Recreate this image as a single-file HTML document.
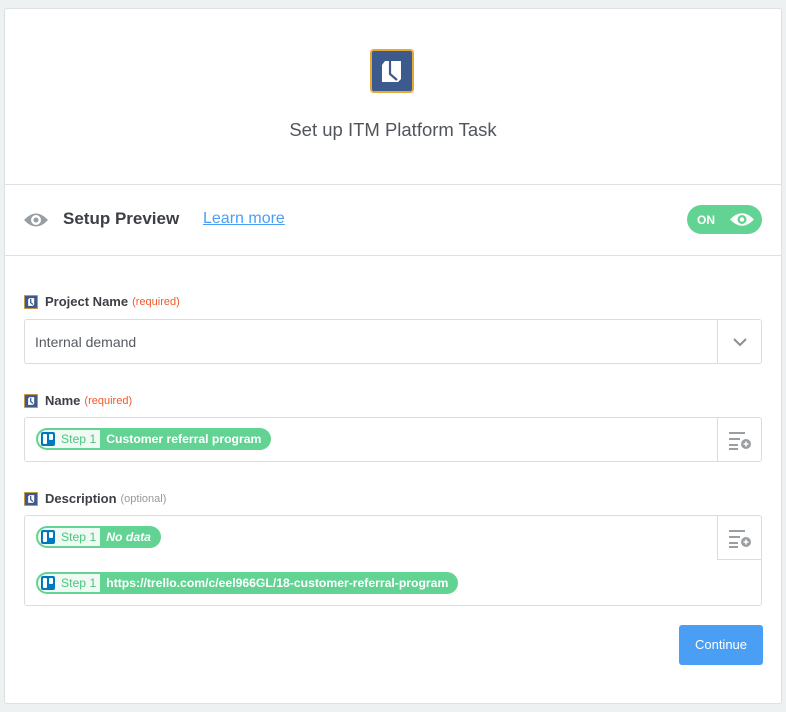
<!DOCTYPE html>
<html><head><meta charset="utf-8"><style>
*{box-sizing:border-box;margin:0;padding:0}
body{width:786px;height:712px;background:#eef1f2;font-family:"Liberation Sans",sans-serif;position:relative;overflow:hidden}
.card{position:absolute;left:4px;top:8px;width:778px;height:696px;background:#fff;border:1px solid #dde1e3;border-radius:3px}
.in{position:absolute;left:-1px;top:0;width:778px;height:696px}
.abs{position:absolute}
.hr{position:absolute;left:0;right:0;height:1px;background:#dde1e3}
.label{position:absolute;left:20px;font-size:13px;color:#3c3f44;font-weight:bold;display:flex;align-items:center}
.label svg{margin-right:7px}
.req{color:#f1592a;font-size:11px;font-weight:normal;margin-left:4px}
.opt{color:#999;font-size:11px;font-weight:normal;margin-left:4px}
.box{position:absolute;left:20px;width:738px;border:1px solid #d9dddf;border-radius:3px}
.side{position:absolute;right:0;top:0;width:44px;height:43px;border-left:1px solid #d9dddf;display:flex;align-items:center;justify-content:center}
.pill{position:absolute;height:22px;background:#63d394;border-radius:11px;display:flex;align-items:center;padding:2px;color:#fff;font-size:12.2px;font-weight:bold;white-space:nowrap}
.pill .st{background:#eefaf3;height:18px;border-radius:9px 0 0 9px;display:flex;align-items:center;padding:0 4px 0 3px;color:#4dc47f;font-weight:normal;margin-right:6px}
.pill .st i{display:inline-block;width:14px;height:14px;background:#0079bf;border-radius:2px;margin-right:6px;position:relative}
.pill .st i:before{content:"";position:absolute;left:2px;top:2px;width:4px;height:10px;background:#fff;border-radius:1px}
.pill .st i:after{content:"";position:absolute;left:8px;top:2px;width:4px;height:6px;background:#fff;border-radius:1px}
.pill .tx{padding-right:8px}
</style></head><body>
<div class="card"><div class="in">
  <svg class="abs" style="left:366px;top:40px" width="44" height="44" viewBox="0 0 44 44">
    <rect x="1" y="1" width="42" height="42" rx="3" fill="#3d5a8c" stroke="#e3a93b" stroke-width="2"/>
    <path d="M12 16 L15 12 L31 12 L31 30 L28 33 L12 33 Z" fill="#fff"/>
    <path d="M20 12 L20 25 L27 31" fill="none" stroke="#3d5a8c" stroke-width="2.2"/>
  </svg>
  <div class="abs" style="left:0;right:0;top:110px;text-align:center;font-size:18.5px;color:#50555b">Set up ITM Platform Task</div>
  <div class="hr" style="top:175px"></div>
  <svg class="abs" style="left:19px;top:202px" width="26" height="18" viewBox="0 0 26 18"><path d="M1 9 Q13 -4 25 9 Q13 22 1 9Z" fill="#999ea2"/><circle cx="13" cy="9" r="5" fill="#fff"/><circle cx="13" cy="9" r="2.5" fill="#999ea2"/></svg>
  <div class="abs" style="left:59px;top:200px;font-size:17px;font-weight:bold;color:#3c3f44">Setup Preview</div>
  <div class="abs" style="left:199px;top:201px;font-size:16px;color:#4a9ff5;text-decoration:underline">Learn more</div>
  <div class="abs" style="left:683px;top:196px;width:75px;height:29px;border-radius:15px;background:#63d394;color:#fff;font-size:12px;font-weight:bold">
    <span class="abs" style="left:10px;top:8px">ON</span>
    <svg class="abs" style="left:42px;top:6px" width="26" height="17" viewBox="0 0 26 17"><path d="M1 8.5 Q13 -4 25 8.5 Q13 21 1 8.5Z" fill="#fff"/><circle cx="13" cy="8.5" r="4.5" fill="#63d394"/><circle cx="13" cy="8.5" r="2.2" fill="#fff"/></svg>
  </div>
  <div class="hr" style="top:246px"></div>

  <div class="label" style="top:285px"><svg width="14" height="14" viewBox="0 0 44 44"><rect x="1" y="1" width="42" height="42" fill="#3d5a8c" stroke="#e3a93b" stroke-width="3"/><path d="M13 14 L17 10 L32 10 L32 30 L28 34 L13 34 Z" fill="#fff"/><path d="M21 12 L21 24 L28 30" fill="none" stroke="#3d5a8c" stroke-width="4"/></svg>Project Name<span class="req">(required)</span></div>
  <div class="box" style="top:310px;height:45px">
    <div class="abs" style="left:10px;top:14px;font-size:14px;color:#555a60">Internal demand</div>
    <div class="side"><svg width="16" height="10" viewBox="0 0 16 10"><path d="M2 2 L8 8 L14 2" fill="none" stroke="#8a8f93" stroke-width="2"/></svg></div>
  </div>

  <div class="label" style="top:384px"><svg width="14" height="14" viewBox="0 0 44 44"><rect x="1" y="1" width="42" height="42" fill="#3d5a8c" stroke="#e3a93b" stroke-width="3"/><path d="M13 14 L17 10 L32 10 L32 30 L28 34 L13 34 Z" fill="#fff"/><path d="M21 12 L21 24 L28 30" fill="none" stroke="#3d5a8c" stroke-width="4"/></svg>Name<span class="req">(required)</span></div>
  <div class="box" style="top:408px;height:45px">
    <div class="pill" style="left:11px;top:10px"><span class="st"><i></i>Step 1</span><span class="tx">Customer referral program</span></div>
    <div class="side"><svg width="24" height="20" viewBox="0 0 24 20"><path d="M1 3H17M1 9H12M1 15H10M1 19H10" stroke="#999ea2" stroke-width="2"/><circle cx="18" cy="14" r="5" fill="#999ea2"/><path d="M15.5 14H20.5M18 11.5V16.5" stroke="#fff" stroke-width="1.6"/></svg></div>
  </div>

  <div class="label" style="top:482px"><svg width="14" height="14" viewBox="0 0 44 44"><rect x="1" y="1" width="42" height="42" fill="#3d5a8c" stroke="#e3a93b" stroke-width="3"/><path d="M13 14 L17 10 L32 10 L32 30 L28 34 L13 34 Z" fill="#fff"/><path d="M21 12 L21 24 L28 30" fill="none" stroke="#3d5a8c" stroke-width="4"/></svg>Description<span class="opt">(optional)</span></div>
  <div class="box" style="top:506px;height:91px">
    <div class="pill" style="left:11px;top:10px"><span class="st"><i></i>Step 1</span><span class="tx" style="font-style:italic">No data</span></div>
    <div class="pill" style="left:11px;top:56px"><span class="st"><i></i>Step 1</span><span class="tx">https://trello.com/c/eel966GL/18-customer-referral-program</span></div>
    <div class="side" style="border-bottom:1px solid #d9dddf;height:44px"><svg width="24" height="20" viewBox="0 0 24 20"><path d="M1 3H17M1 9H12M1 15H10M1 19H10" stroke="#999ea2" stroke-width="2"/><circle cx="18" cy="14" r="5" fill="#999ea2"/><path d="M15.5 14H20.5M18 11.5V16.5" stroke="#fff" stroke-width="1.6"/></svg></div>
  </div>

  <div class="abs" style="left:675px;top:616px;width:84px;height:40px;background:#4a9ff5;border-radius:3px;color:#fff;font-size:13px;text-align:center;line-height:40px">Continue</div>
</div></div>
</body></html>
